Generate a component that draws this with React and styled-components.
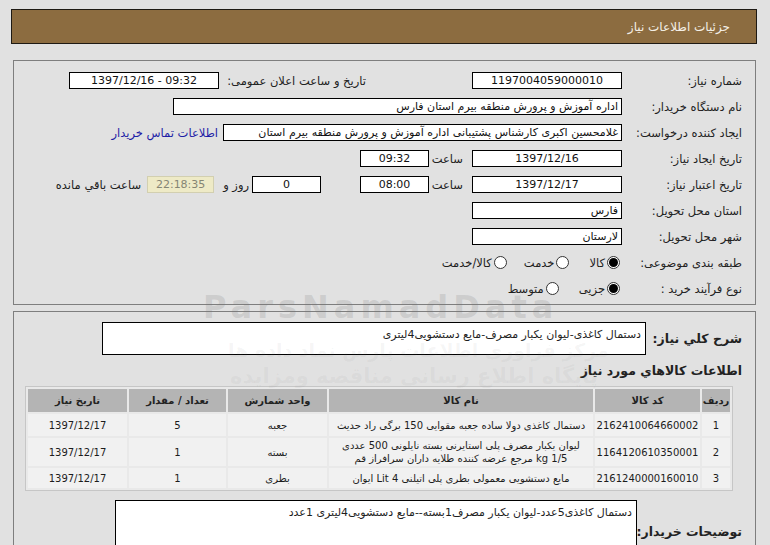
import React from "react";
import styled, { createGlobalStyle, css } from "styled-components";

const Global = createGlobalStyle`
  html, body { margin: 0; padding: 0; background: #e1e1e1; }
  body { font-family: "DejaVu Sans", "Noto Sans", sans-serif; color: #1e1e1e; }
  * { box-sizing: border-box; }
`;

const Page = styled.div`
  position: relative;
  width: 770px;
  height: 545px;
  overflow: hidden;
  padding-top: 9px;
  direction: rtl;
`;

const Header = styled.div`
  margin: 0 13px 0 11px;
  height: 35px;
  background: #8c6c40;
  border: 1px solid #1e1a14;
  color: #f4efe6;
  font-size: 12px;
  display: flex;
  align-items: center;
  padding-right: 26px;
`;

const Panel = styled.div`
  margin: ${(p) => p.$mt}px 14px 0 13px;
  border: 1px solid #7e7e7e;
  padding: ${(p) => p.$pad};
  height: ${(p) => (p.$h ? `${p.$h}px` : "auto")};
`;

const Row = styled.div`
  display: flex;
  align-items: center;
  height: 17px;
  margin-bottom: 9px;
  &:last-child { margin-bottom: 0; }
`;

const Label = styled.div`
  width: 120px;
  flex-shrink: 0;
  white-space: nowrap;
  font-size: 11.5px;
  text-align: right;
  color: #222;
`;

const Txt = styled.span`
  flex-shrink: 0;
  white-space: nowrap;
  font-size: 11.5px;
  color: #222;
  margin-right: ${(p) => p.$mr || 0}px;
  width: ${(p) => (p.$w ? `${p.$w}px` : "auto")};
  text-align: right;
`;

const Field = styled.div`
  flex-shrink: 0;
  width: ${(p) => p.$w}px;
  height: 17px;
  margin-right: ${(p) => p.$mr || 0}px;
  background: #fff;
  border: 1px solid #000;
  font-size: 11px;
  line-height: 15px;
  padding: 0 3px;
  white-space: nowrap;
  overflow: hidden;
  text-align: ${(p) => (p.$right ? "right" : "center")};
  direction: ${(p) => (p.$right ? "rtl" : "ltr")};
  color: #111;
  ${(p) =>
    p.$timer &&
    css`
      background: #eeeac6;
      border-color: #d2cfb0;
      color: #858574;
    `}
`;

const Link = styled.a`
  font-size: 11.5px;
  color: #1d1da6;
  text-decoration: none;
  margin-right: 5px;
  white-space: nowrap;
`;

const Option = styled.span`
  display: inline-flex;
  align-items: center;
  gap: 2px;
  margin-right: ${(p) => p.$mr}px;
  font-size: 11.5px;
  white-space: nowrap;
`;

const Radio = styled.span`
  width: 13px;
  height: 13px;
  border-radius: 50%;
  border: 1px solid #333;
  background: #fff;
  display: inline-flex;
  align-items: center;
  justify-content: center;
  flex-shrink: 0;
  &::after {
    content: "";
    width: 9px;
    height: 9px;
    border-radius: 50%;
    background: ${(p) => (p.$on ? "#000" : "transparent")};
  }
`;

const DescRow = styled.div`
  display: flex;
  align-items: center;
`;

const BoldLabel = styled.div`
  width: ${(p) => p.$w}px;
  flex-shrink: 0;
  font-size: 12.5px;
  font-weight: bold;
  white-space: nowrap;
  color: #222;
  padding-top: ${(p) => p.$pt || 0}px;
  align-self: ${(p) => (p.$top ? "flex-start" : "center")};
`;

const Area = styled.div`
  width: ${(p) => p.$w}px;
  height: ${(p) => p.$h}px;
  margin-right: 2px;
  background: #fff;
  border: 1px solid #000;
  font-size: 11px;
  padding: 5px 4px;
  text-align: right;
  line-height: 14px;
`;

const Heading = styled.div`
  margin-top: 8px;
  font-size: 12.5px;
  font-weight: bold;
  height: 16px;
  line-height: 16px;
  color: #222;
`;

const Table = styled.table`
  margin: 7px 9px 0 0;
  width: 706px;
  table-layout: fixed;
  border-collapse: separate;
  border-spacing: 2px;
  background: #e9e9e9;
  border: 1px solid #c6c6c6;
  font-size: 10px;
`;

const Th = styled.th`
  background: #b4b4b4;
  height: 23px;
  font-weight: bold;
  color: #222;
  font-size: 10px;
  padding: 0;
  white-space: nowrap;
`;

const Td = styled.td`
  background: #f1f1f1;
  height: ${(p) => p.$h || 21}px;
  text-align: center;
  padding: 0 1px;
  color: #1c1c1c;
  line-height: 13px;
  white-space: nowrap;
  overflow: hidden;
`;

const BuyerRow = styled.div`
  display: flex;
  margin-top: 9px;
`;

const Watermark = styled.div`
  position: absolute;
  left: ${(p) => p.$x}px;
  top: ${(p) => p.$y}px;
  font-family: "DejaVu Sans", sans-serif;
  font-size: ${(p) => p.$size}px;
  line-height: 1;
  letter-spacing: ${(p) => p.$ls || 0}px;
  font-weight: bold;
  color: rgba(120, 120, 120, ${(p) => p.$a});
  white-space: nowrap;
  pointer-events: none;
  direction: ltr;
`;

const rows = [
  {
    n: "1",
    code: "2162410064660002",
    name: ["دستمال کاغذی دولا ساده جعبه مقوایی 150 برگی راد حدیث"],
    unit: "جعبه",
    qty: "5",
    date: "1397/12/17",
    h: 22,
  },
  {
    n: "2",
    code: "1164120610350001",
    name: [
      "لیوان یکبار مصرف پلی استایرنی بسته نایلونی 500 عددی",
      "kg 1/5 مرجع عرضه کننده طلایه داران سرافراز قم",
    ],
    unit: "بسته",
    qty: "1",
    date: "1397/12/17",
    h: 28,
  },
  {
    n: "3",
    code: "2161240000160010",
    name: ["مایع دستشویی معمولی بطری پلی اتیلنی 4 Lit ایوان"],
    unit: "بطری",
    qty: "1",
    date: "1397/12/17",
    h: 20,
  },
];

export default function App() {
  return (
    <>
      <Global />
      <Page>
        <Header>جزئیات اطلاعات نیاز</Header>

        <Panel $mt={16} $pad="11px 13px 0 0" $h={245}>
          <Row>
            <Label>شماره نیاز:</Label>
            <Field $w={150}>1197004059000010</Field>
            <Txt $mr={106} $w={147}>تاریخ و ساعت اعلان عمومی:</Txt>
            <Field $w={150}>1397/12/16 - 09:32</Field>
          </Row>
          <Row>
            <Label>نام دستگاه خریدار:</Label>
            <Field $w={449} $right>اداره آموزش و پرورش منطقه بیرم استان فارس</Field>
          </Row>
          <Row>
            <Label>ایجاد کننده درخواست:</Label>
            <Field $w={399} $right>
              غلامحسین اکبری کارشناس پشتیبانی اداره آموزش و پرورش منطقه بیرم استان
            </Field>
            <Link href="#">اطلاعات تماس خریدار</Link>
          </Row>
          <Row>
            <Label>تاریخ ایجاد نیاز:</Label>
            <Field $w={150}>1397/12/16</Field>
            <Txt $mr={9} $w={29}>ساعت</Txt>
            <Field $w={69} $mr={5}>09:32</Field>
          </Row>
          <Row>
            <Label>تاریخ اعتبار نیاز:</Label>
            <Field $w={150}>1397/12/17</Field>
            <Txt $mr={9} $w={29}>ساعت</Txt>
            <Field $w={69} $mr={5}>08:00</Field>
            <Field $w={69} $mr={39}>0</Field>
            <Txt $mr={3}>روز و</Txt>
            <Field $w={67} $mr={9} $timer>22:18:35</Field>
            <Txt $mr={6}>ساعت باقي مانده</Txt>
          </Row>
          <Row>
            <Label>استان محل تحویل:</Label>
            <Field $w={150} $right>فارس</Field>
          </Row>
          <Row>
            <Label>شهر محل تحویل:</Label>
            <Field $w={150} $right>لارستان</Field>
          </Row>
          <Row>
            <Label>طبقه بندی موضوعی:</Label>
            <Option $mr={2}><Radio $on />کالا</Option>
            <Option $mr={20}><Radio />خدمت</Option>
            <Option $mr={17}><Radio />کالا/خدمت</Option>
          </Row>
          <Row>
            <Label>نوع فرآیند خرید :</Label>
            <Option $mr={2}><Radio $on />جزیی</Option>
            <Option $mr={20}><Radio />متوسط</Option>
          </Row>
        </Panel>

        <Panel $mt={6} $pad="10px 13px 0 0">
          <DescRow>
            <BoldLabel $w={94}>شرح کلي نیاز:</BoldLabel>
            <Area $w={544} $h={33}>دستمال کاغذی-لیوان یکبار مصرف-مایع دستشویی4لیتری</Area>
          </DescRow>
          <Heading>اطلاعات کالاهاي مورد نیاز</Heading>
          <Table>
            <colgroup>
              <col style={{ width: "28px" }} />
              <col style={{ width: "105px" }} />
              <col style={{ width: "264px" }} />
              <col style={{ width: "99px" }} />
              <col style={{ width: "97px" }} />
              <col style={{ width: "99px" }} />
            </colgroup>
            <thead>
              <tr>
                <Th>ردیف</Th>
                <Th>کد کالا</Th>
                <Th>نام کالا</Th>
                <Th>واحد شمارش</Th>
                <Th>تعداد / مقدار</Th>
                <Th>تاریخ نیاز</Th>
              </tr>
            </thead>
            <tbody>
              {rows.map((r) => (
                <tr key={r.n}>
                  <Td $h={r.h}>{r.n}</Td>
                  <Td $h={r.h}>{r.code}</Td>
                  <Td $h={r.h}>
                    {r.name.map((l, i) => (
                      <div key={i}>{l}</div>
                    ))}
                  </Td>
                  <Td $h={r.h}>{r.unit}</Td>
                  <Td $h={r.h}>{r.qty}</Td>
                  <Td $h={r.h}>{r.date}</Td>
                </tr>
              ))}
            </tbody>
          </Table>
          <BuyerRow>
            <BoldLabel $w={103} $top $pt={24}>توضیحات خریدار:</BoldLabel>
            <Area $w={522} $h={80}>
              دستمال کاغذی5عدد-لیوان یکبار مصرف1بسته--مایع دستشویی4لیتری 1عدد
            </Area>
          </BuyerRow>
        </Panel>

        <Watermark $x={203} $y={291} $size={32} $ls={5} $a={0.2}>
          ParsNamadData
        </Watermark>
        <Watermark $x={228} $y={341} $size={19} $a={0.07}>
          مرکز فراوری اطلاعات پارس نماد داده ها
        </Watermark>
        <Watermark $x={230} $y={366} $size={21} $a={0.07}>
          پایگاه اطلاع رسانی مناقصه ومزایده
        </Watermark>
      </Page>
    </>
  );
}
